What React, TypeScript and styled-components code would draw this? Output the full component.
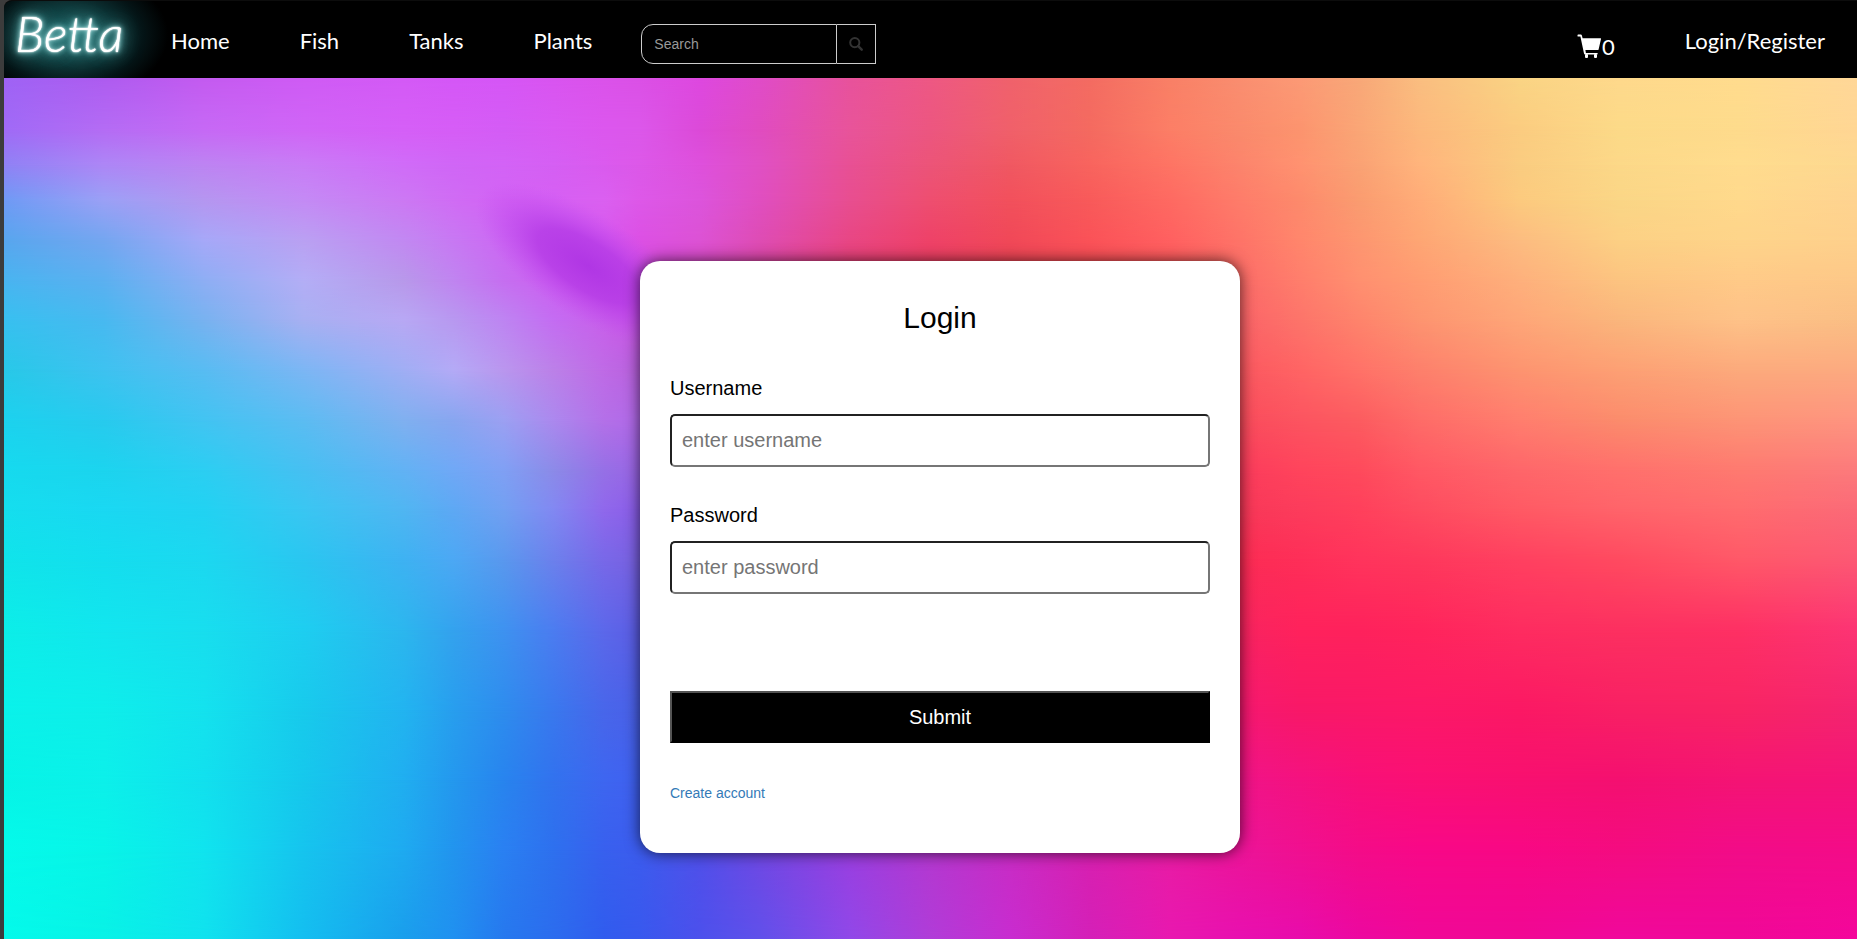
import React from "react";
import styled, { createGlobalStyle } from "styled-components";

const GlobalStyle = createGlobalStyle`
  * { box-sizing: border-box; }
  html, body { margin: 0; padding: 0; background: #3c3c3c; }
  body {
    font-family: "Liberation Sans", Arial, sans-serif;
    font-size: 14px;
    line-height: 20px;
    color: #000;
  }
`;

const Page = styled.div`
  display: flex;
  flex-direction: column;
  min-height: 100vh;
  margin-left: 4px;
`;

const Header = styled.header`
  display: flex;
  align-items: center;
  height: 78px;
  padding-right: 32px;
  background: #000;
  border-top: 1px solid #0c0c0c;
  border-top-left-radius: 8px;
  overflow: hidden;
`;

const Logo = styled.a`
  display: flex;
  align-items: center;
  align-self: stretch;
  width: 167px;
  padding: 0 0 13px 11px;
  background: radial-gradient(ellipse 100px 66px at 64px 34px, #1d5a5c 0%, #123c3e 40%, #051416 75%, #000 100%);
  color: #fff;
  font-family: Lato, sans-serif;
  font-size: 50px;
  font-style: italic;
  font-weight: 300;
  line-height: 56px;
  text-decoration: none;
  text-shadow: 0 0 1px #fff, 0 0 2px #fff, 0 0 5px #b8f4f4, 0 0 9px #7cd4d4, 0 0 16px #4fb0b0, 0 0 22px #3f9a9a;
`;

const Nav = styled.nav`
  display: flex;
  gap: 70px;
  padding-top: 2px;
`;

const NavLink = styled.a`
  display: flex;
  align-items: center;
  color: #fff;
  font-family: "Gill Sans MT", "Gill Sans", Lato, sans-serif;
  font-size: 22px;
  line-height: 32px;
  text-decoration: none;
`;

const SearchForm = styled.form`
  display: flex;
  width: 235px;
  height: 40px;
  margin: 8px auto 0 49px;
`;

const SearchInput = styled.input`
  flex: 1;
  min-width: 0;
  padding: 6px 12px;
  border: 1px solid #ccc;
  border-radius: 12px 0 0 12px;
  background: #000;
  color: #fff;
  font: inherit;
  &::placeholder { color: #999; opacity: 1; }
`;

const SearchButton = styled.button`
  display: flex;
  align-items: center;
  justify-content: center;
  width: 39px;
  padding: 0;
  border: 1px solid #ccc;
  border-left: 0;
  background: #000;
  color: #333;
`;

const Actions = styled.div`
  display: flex;
  align-items: flex-start;
  gap: 70px;
  padding-top: 8px;
`;

const CartLink = styled(NavLink)`
  padding-top: 6px;
`;

const Main = styled.main`
  position: relative;
  display: flex;
  flex: 1;
  align-items: center;
  justify-content: center;
  padding: 157px 20px 60px 39px;
  overflow: hidden;
`;

const Backdrop = styled.svg`
  position: absolute;
  inset: 0;
  width: 100%;
  height: 100%;
`;

const Card = styled.form`
  position: relative;
  display: flex;
  flex-direction: column;
  width: 600px;
  max-width: 100%;
  padding: 30px;
  border-radius: 20px;
  background: #fff;
  box-shadow: 0 0 15px rgba(0, 0, 0, 0.7);
`;

const Title = styled.h1`
  margin: 0 0 29px;
  font-size: 30px;
  font-weight: 400;
  line-height: 54px;
  text-align: center;
`;

const Field = styled.div`
  display: flex;
  flex-direction: column;
  gap: 12px;
  margin-bottom: 34px;
`;

const Label = styled.label`
  font-size: 20px;
  line-height: 28px;
`;

const TextInput = styled.input`
  width: 100%;
  height: 53px;
  padding: 10px;
  border: 2px inset #767676;
  border-radius: 5px;
  background: #fff;
  font: inherit;
  font-size: 20px;
  line-height: 28px;
  &::placeholder { color: #757575; opacity: 1; }
`;

const SubmitButton = styled.button`
  height: 52px;
  margin: 63px 0 40px;
  border: 2px outset #000;
  background: #000;
  color: #fff;
  font-family: inherit;
  font-size: 20px;
`;

const CreateLink = styled.a`
  align-self: flex-start;
  margin-bottom: 20px;
  color: #337ab7;
  text-decoration: none;
`;

const LEFT = [4, 104, 204, 304, 404, 454, 504, 554, 604, 640];
const MIDDLE = [700, 760, 850, 930, 1010, 1090, 1170];
const RIGHT = [1240, 1300, 1360, 1420, 1520, 1620, 1740, 1857];

type MeshRow = { y: number; left: string; middle?: string; right: string };

const MESH: MeshRow[] = [
  { y: 78, left: "9f63f5 ae5cf0 c45bf0 cf5bf5 d45af6 d557f7 d656f6 d954f0 db52ea db50e6", middle: "de48e0 e04cc8 e8529c ee5884 f0626c f46c62 f98066", right: "fa8e70 fc9a76 f8a878 fabe80 fad484 fed98c ffdc8e ffd798" },
  { y: 130, left: "a06af6 b46cf4 c669f5 d065f6 d55ff7 d65df6 d45cf5 d95af2 dc57ee dc57ea", middle: "dc4ad8 e04cc0 e8549a ec5680 f0606a f46a60 fc7e66", right: "fa8a6c fc946e faa676 fcb87c fbcc80 fcda88 fedb8c ffd694" },
  { y: 165, left: "8f82f5 ad86f6 bd84f2 c97cf6 d06cf8 d066f6 d363f6 d55ff3 da5aee dc58e8", middle: "de50dc e050c4 e85094 ec5478 f05862 f8645e fe7464", right: "fc846c ff9270 faa274 ffb47c facc80 fcd888 ffdc8e fdd890" },
  { y: 200, left: "6f9af5 9ba0f6 b596f0 c48af5 cc78f3 d06cf4 d363f4 d660f3 da60f0 dd58e8", middle: "dc54dc e04ec0 e84e90 ee4e70 f2505c f85a5a fe6a62", right: "fe7c6a fd8a6c fa9c70 ffac78 fcca7e fad686 ffd98c fed390" },
  { y: 240, left: "58a6ee 74a6f0 a6a8f8 baa0f2 c288f2 c878f3 cc68f3 d060f0 d858ee dc50e4", middle: "dc52d4 de4cb4 e84684 ee4268 f04858 fa5258 ff6060", right: "fe7468 ff866c fd9670 fea674 fcbc80 fcd084 fed48a fed08c" },
  { y: 280, left: "49b4f0 5cb0f0 8eaef4 b4aef6 b898ea c084f0 c66ef0 cc60f0 d056ea d44ce0", middle: "d848c0 de44a0 e83c70 ee3c60 f04454 fa4c54 ff585c", right: "fc6c68 ff7e6c ff9070 ff9c72 feb07c fcc480 ffca88 fdc888" },
  { y: 320, left: "38c0f0 48b9f0 78b2f0 a8b0f2 b8a8f4 b898f0 be84f2 c46cf2 c860ea c854e4", right: "fb6468 fd746a fe846c fd9470 fea678 fab67c fec288 fabe84" },
  { y: 370, left: "28c8e8 3ec2f0 58bcf2 7cb6f4 a0aef4 b4aaf6 ba96ee bc80e8 bf6ae6 b860dc", right: "fb5860 ff6464 ff7268 fd806c fd9470 fda074 fcaa7c fcaa80" },
  { y: 420, left: "1cd2ee 28caee 42c4f2 5cbcf2 80b0f0 88a6f0 9ca0f2 ac88ee b470e8 b068e8", right: "fa4c5c fc5460 fc5c60 fe6c68 ff7e6e fb8c6c fd9476 fe9480" },
  { y: 470, left: "16daee 1cd4ee 2ccef2 46c0f2 62b2f4 70a8f6 80a0f4 8c8ae8 9670e6 9a64e4", right: "fb3c5c ff445c fe4a5c ff5864 fe666a ff706c fe7a70 fc7a7c" },
  { y: 509, left: "15deee 1ad8f2 22d2f2 3ac6f2 50b6f2 5ea8f4 72a0f2 8288f2 9068ec 8a5ce8", right: "f83858 fc3c5c ff405c fe4c60 ff5a64 ff646a ff6c6e fb6a78" },
  { y: 560, left: "10e4ea 14deee 1cd8f0 2ac6f0 3eb2f2 4ca8f4 5a98ee 6c80ec 7868e8 7860e0", right: "fc2c54 fe2e58 ff345c fe385c ff4060 ff4a60 ff5868 fc5874" },
  { y: 630, left: "0ceee8 12e6ee 18deee 1ecef0 2cb6ee 34a2ee 3e92f0 4c7cf0 5c68ea 5c5ce4", right: "f82460 ff225c fe225c ff245c fe2c60 fc3060 fe3064 fc3474" },
  { y: 710, left: "0af2ea 0eeeea 14e2ee 18caec 22b4f0 289eee 2e8cee 3a78ee 4866ea 4a60e8", right: "f61870 f81868 fa1868 fc1868 fb1864 f82064 f82464 f42470" },
  { y: 780, left: "06f4e6 0cf0ea 12e0ee 16c8ec 20aef0 2498ee 2884ee 3272ee 3e66f0 4060f0", right: "f01488 f41280 f81078 fa1074 f81070 f41070 f41474 f41478" },
  { y: 850, left: "04faea 08f4e8 10e4ee 16c4ee 1eaaf0 2294ee 2a80f2 2e70ee 3860ee 3c5cee", middle: "5050ea 7048e4 9a3ee0 b438d0 c82cc4 d820b0 e81ca4", right: "ec1498 f01090 f40c88 f80888 f80884 f40c80 f20c88 f40c88" },
  { y: 939, left: "04faea 08f2e6 10e2ee 14bef0 1a9eec 2090f0 2678ee 2c6cee 305cee 3858ee", middle: "4c50ec 6050ea 9048e8 b03cd8 c82cd0 d420b8 e818b0", right: "e810b0 e80cac ec08a0 f00898 f00894 f0089c f00898 f4069c" },
];

const ORIGIN_X = 4;
const ORIGIN_Y = 78;
const MESH_WIDTH = 1853;
const MESH_HEIGHT = 861;

function rowStops(row: MeshRow) {
  const pair = (xs: number[], colors?: string) =>
    colors ? colors.split(" ").map((c, i) => ({ x: xs[i], color: `#${c}` })) : [];
  return [...pair(LEFT, row.left), ...pair(MIDDLE, row.middle), ...pair(RIGHT, row.right)];
}

/* Each row is a horizontal gradient that fades in over the one above it. */
function GradientMesh() {
  return (
    <Backdrop viewBox={`0 0 ${MESH_WIDTH} ${MESH_HEIGHT}`} preserveAspectRatio="none" aria-hidden="true">
      <defs>
        {MESH.map((row, i) => (
          <React.Fragment key={row.y}>
            <linearGradient id={`row${i}`}>
              {rowStops(row).map((s) => (
                <stop key={s.x} offset={(s.x - ORIGIN_X) / MESH_WIDTH} stopColor={s.color} />
              ))}
            </linearGradient>
            {i > 0 && (
              <>
                <linearGradient id={`fade${i}`} x1="0" y1="0" x2="0" y2="1">
                  <stop offset={(MESH[i - 1].y - ORIGIN_Y) / MESH_HEIGHT} stopColor="#fff" stopOpacity="0" />
                  <stop offset={(row.y - ORIGIN_Y) / MESH_HEIGHT} stopColor="#fff" stopOpacity="1" />
                </linearGradient>
                <mask id={`mask${i}`} style={{ maskType: "alpha" }}>
                  <rect width={MESH_WIDTH} height={MESH_HEIGHT} fill={`url(#fade${i})`} />
                </mask>
              </>
            )}
          </React.Fragment>
        ))}
        <radialGradient id="violet">
          <stop offset="0" stopColor="#b036e4" />
          <stop offset="0.45" stopColor="#b43ae6" stopOpacity="0.8" />
          <stop offset="0.75" stopColor="#bc44ec" stopOpacity="0.35" />
          <stop offset="1" stopColor="#c450f0" stopOpacity="0" />
        </radialGradient>
      </defs>
      {MESH.map((row, i) => (
        <rect
          key={row.y}
          width={MESH_WIDTH}
          height={MESH_HEIGHT}
          fill={`url(#row${i})`}
          mask={i > 0 ? `url(#mask${i})` : undefined}
        />
      ))}
      <ellipse rx="130" ry="52" fill="url(#violet)" transform="translate(584 188) rotate(33)" />
    </Backdrop>
  );
}

function CartIcon() {
  return (
    <svg width="25" height="25" viewBox="0 0 25 25" fill="currentColor" aria-hidden="true">
      <path d="M0.5 1.2Q0.5 0.5 1.2 0.5H3.8Q4.6 0.5 4.9 1.4L5.6 4.2H23.6Q24.2 4.2 24 5L21.6 15.4Q21.4 16 20.7 16H8.4L8.9 19H20Q20.8 19 20.8 19.8Q20.8 20.6 20 20.6H8Q7.2 20.6 7 19.6L3.4 2.6H1.2Q0.5 2.6 0.5 1.9Z" />
      <rect x="8" y="20" width="3" height="4" rx="1" />
      <rect x="17" y="20" width="3" height="4" rx="1" />
    </svg>
  );
}

function SearchIcon() {
  return (
    <svg width="14" height="14" viewBox="0 0 14 14" fill="none" stroke="currentColor" aria-hidden="true">
      <circle cx="5.8" cy="5.6" r="4.6" strokeWidth="2" />
      <path d="M9.2 9.2L12.7 12.7" strokeWidth="2.4" strokeLinecap="round" />
    </svg>
  );
}

export default function App() {
  return (
    <>
      <GlobalStyle />
      <Page>
        <Header>
          <Logo href="#">Betta</Logo>
          <Nav>
            <NavLink href="#">Home</NavLink>
            <NavLink href="#">Fish</NavLink>
            <NavLink href="#">Tanks</NavLink>
            <NavLink href="#">Plants</NavLink>
          </Nav>
          <SearchForm role="search">
            <SearchInput type="text" placeholder="Search" aria-label="Search" />
            <SearchButton type="button" aria-label="Submit search">
              <SearchIcon />
            </SearchButton>
          </SearchForm>
          <Actions>
            <CartLink href="#">
              <CartIcon />0
            </CartLink>
            <NavLink href="#">Login/Register</NavLink>
          </Actions>
        </Header>
        <Main>
          <GradientMesh />
          <Card>
            <Title>Login</Title>
            <Field>
              <Label htmlFor="username">Username</Label>
              <TextInput id="username" type="text" placeholder="enter username" />
            </Field>
            <Field>
              <Label htmlFor="password">Password</Label>
              <TextInput id="password" type="password" placeholder="enter password" />
            </Field>
            <SubmitButton type="button">Submit</SubmitButton>
            <CreateLink href="#">Create account</CreateLink>
          </Card>
        </Main>
      </Page>
    </>
  );
}
